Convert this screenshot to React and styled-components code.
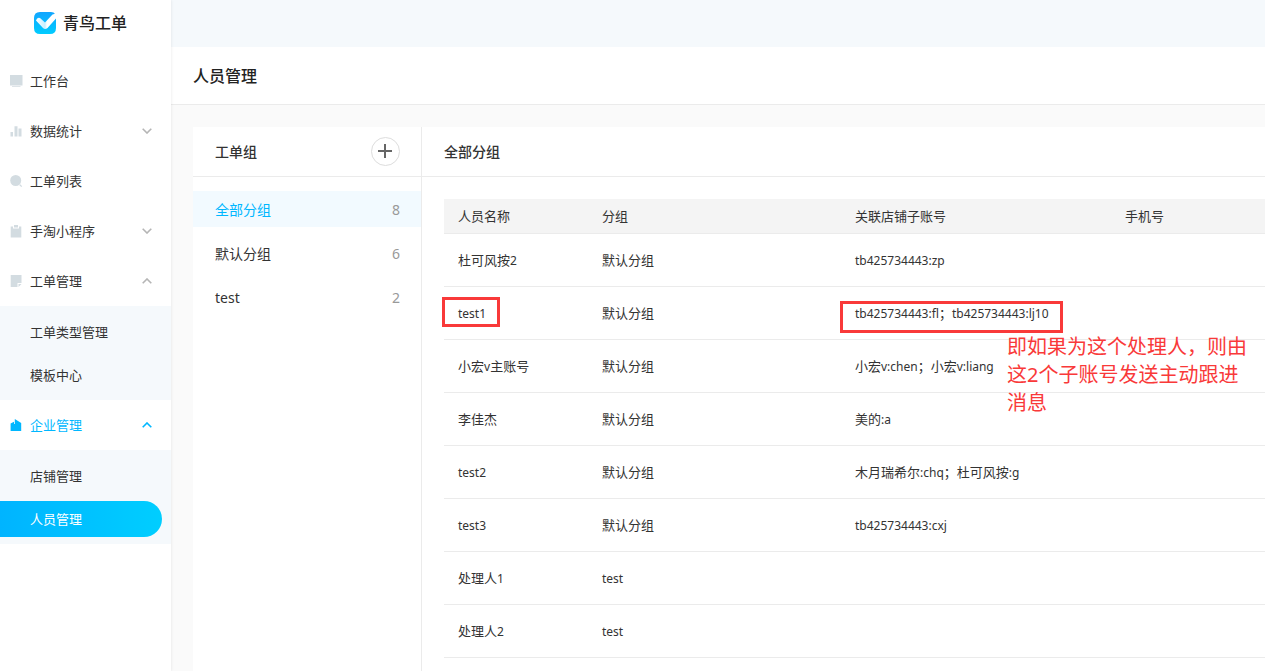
import React, { useState } from "react";
import styled, { createGlobalStyle, css } from "styled-components";

const menus = [
  { key: "desk", label: "工作台" },
  { key: "stats", label: "数据统计", children: [] },
  { key: "list", label: "工单列表" },
  { key: "mini", label: "手淘小程序", children: [] },
  { key: "order", label: "工单管理", open: true, children: ["工单类型管理", "模板中心"] },
  { key: "company", label: "企业管理", open: true, active: true, children: ["店铺管理", "人员管理"] },
];

const groups = [
  { name: "全部分组", count: 8 },
  { name: "默认分组", count: 6 },
  { name: "test", count: 2 },
];

const members = [
  { name: "杜可风按2", group: "默认分组", account: "tb425734443:zp" },
  { name: "test1", group: "默认分组", account: "tb425734443:fl；tb425734443:lj10", marked: true },
  { name: "小宏v主账号", group: "默认分组", account: "小宏v:chen；小宏v:liang" },
  { name: "李佳杰", group: "默认分组", account: "美的:a" },
  { name: "test2", group: "默认分组", account: "木月瑞希尔:chq；杜可风按:g" },
  { name: "test3", group: "默认分组", account: "tb425734443:cxj" },
  { name: "处理人1", group: "test", account: "" },
  { name: "处理人2", group: "test", account: "" },
];

function MenuIcon({ name }) {
  return (
    <Icon viewBox="0 0 12 12" aria-hidden="true">
      {name === "desk" && <path d="M0 0h12.500v10.500H0zM2 11.200h8.500v.8H2z" />}
      {name === "stats" && (
        <path d="M.5 7H3v4.500H.5zM4.500 1.200h3v10.300h-3zM8.500 3.500h3v8h-3z" />
      )}
      {name === "list" && (
        <>
          <circle cx="5.7" cy="5.5" r="5.5" />
          <path d="M9.300 10.300l1-1 1.900 1.900-.9.8z" />
        </>
      )}
      {name === "mini" && (
        <path d="M.7 1.500H3V3.600h6V1.500h2.300V12.500H.7zM4 0h4v2.600H4z" />
      )}
      {name === "order" && <path d="M.7 0h10.800v8H7.500v4H.7zM8.500 9h3l-3 3z" />}
      {name === "company" && (
        <path d="M.6 4.500L4 2.800V5h.8V0l6.400 4v8H.6z" />
      )}
    </Icon>
  );
}

function Chevron({ up }) {
  return (
    <Arrow viewBox="0 0 10 6" aria-hidden="true">
      <path d={up ? "M.7 5.300L5 1l4.300 4.300" : "M.7.7L5 5 9.300.7"} />
    </Arrow>
  );
}

// Latin runs are set one size down so they sit evenly next to the Chinese
function Mixed({ text }) {
  return text
    .split(/([\x20-\x7e]+)/)
    .filter(Boolean)
    .map((part, i) =>
      /^[\x20-\x7e]/.test(part) ? <Latin key={i}>{part}</Latin> : part
    );
}

export default function App() {
  const [currentGroup, setCurrentGroup] = useState(0);
  const [currentPage, setCurrentPage] = useState("人员管理");

  return (
    <>
      <GlobalStyle />
      <Layout>
        <Sidebar>
          <Brand>
            <Logo viewBox="0 0 22 22" aria-hidden="true">
              <defs>
                <linearGradient id="logoBg" x1="0" y1="0" x2="0" y2="1">
                  <stop offset="0" stopColor="#12a5ff" />
                  <stop offset="1" stopColor="#00ccff" />
                </linearGradient>
                <linearGradient id="logoTick" x1="0" y1="0" x2="1" y2="0">
                  <stop offset="0" stopColor="#fff" />
                  <stop offset="0.450" stopColor="#c8efff" />
                  <stop offset="0.550" stopColor="#fff" />
                </linearGradient>
              </defs>
              <path
                fill="url(#logoBg)"
                d="M6 0h11q3 0 4 2l1 4v10q0 6-6 6H6q-6 0-6-6V6q0-6 6-6z"
              />
              <path
                fill="url(#logoTick)"
                d="M2 8.500q1-3.500 4-2.500l5 4.500L18.500 2.500 22 1.500v5L13.500 16q-2.500 2-4.500 0z"
              />
            </Logo>
            青鸟工单
          </Brand>
          <nav>
            {menus.map((menu) => (
              <React.Fragment key={menu.key}>
                <MenuButton type="button" $active={menu.active}>
                  <MenuIcon name={menu.key} />
                  <span>{menu.label}</span>
                  {menu.children && <Chevron up={menu.open} />}
                </MenuButton>
                {menu.open && (
                  <SubMenu>
                    {menu.children.map((page) => (
                      <SubLink
                        key={page}
                        href="#"
                        $active={page === currentPage}
                        onClick={() => setCurrentPage(page)}
                      >
                        {page}
                      </SubLink>
                    ))}
                  </SubMenu>
                )}
              </React.Fragment>
            ))}
          </nav>
        </Sidebar>

        <Main>
          <TopBar />
          <PageHeader>
            <h1>人员管理</h1>
          </PageHeader>
          <Content>
            <GroupPanel>
              <PanelHeader>
                <h2>工单组</h2>
                <AddButton type="button" aria-label="新增">
                  <svg viewBox="0 0 15 15" aria-hidden="true">
                    <path d="M7 0v14M0 7h14" />
                  </svg>
                </AddButton>
              </PanelHeader>
              <GroupList>
                {groups.map((group, index) => (
                  <GroupButton
                    key={group.name}
                    type="button"
                    $active={index === currentGroup}
                    onClick={() => setCurrentGroup(index)}
                  >
                    <span>{group.name}</span>
                    <Count>{group.count}</Count>
                  </GroupButton>
                ))}
              </GroupList>
            </GroupPanel>

            <MemberPanel>
              <PanelHeader>
                <h2>全部分组</h2>
              </PanelHeader>
              <TableWrap>
                <Table>
                  <colgroup>
                    <Col $width={144} />
                    <Col $width={253} />
                    <Col $width={270} />
                    <col />
                  </colgroup>
                  <thead>
                    <tr>
                      <th scope="col">人员名称</th>
                      <th scope="col">分组</th>
                      <th scope="col">关联店铺子账号</th>
                      <th scope="col">手机号</th>
                    </tr>
                  </thead>
                  <tbody>
                    {members.map((member) => (
                      <tr key={member.name}>
                        <td>
                          <Mixed text={member.name} />
                          {member.marked && <NameMark />}
                        </td>
                        <td>
                          <Mixed text={member.group} />
                        </td>
                        <td>
                          <Mixed text={member.account} />
                          {member.marked && (
                            <>
                              <AccountMark />
                              <Note>即如果为这个处理人，则由这2个子账号发送主动跟进消息</Note>
                            </>
                          )}
                        </td>
                        <td></td>
                      </tr>
                    ))}
                  </tbody>
                </Table>
              </TableWrap>
            </MemberPanel>
          </Content>
        </Main>
      </Layout>
    </>
  );
}

const GlobalStyle = createGlobalStyle`
  * {
    box-sizing: border-box;
  }
  body {
    margin: 0;
    color: #333;
    background: #fafafa;
    font-family: "Noto Sans", "Noto Sans CJK SC", sans-serif;
    font-size: 13px;
    line-height: 20px;
  }
  button {
    padding: 0;
    border: 0;
    background: none;
    color: inherit;
    font: inherit;
    text-align: left;
    cursor: pointer;
  }
  h1, h2 {
    margin: 0;
    font-weight: 500;
  }
`;

const Layout = styled.div`
  display: flex;
  min-height: 100vh;
`;

const Sidebar = styled.aside`
  flex: 0 0 171px;
  position: relative;
  background: #fff;
  box-shadow: 0 0 3px rgba(0, 0, 0, 0.1);
`;

const Brand = styled.div`
  display: flex;
  align-items: center;
  gap: 7px;
  height: 45px;
  margin-bottom: 11px;
  padding-left: 34px;
  color: #222;
  font-size: 16px;
  font-weight: 500;
`;

const Logo = styled.svg`
  width: 22px;
  height: 22px;
`;

const Icon = styled.svg`
  flex: none;
  width: 12px;
  height: 12px;
  overflow: visible;
  fill: #d3dce1;
`;

const Arrow = styled.svg`
  width: 10px;
  height: 6px;
  margin-left: auto;
  fill: none;
  stroke: #b5b5b5;
  stroke-width: 1.6;
`;

const MenuButton = styled.button`
  display: flex;
  align-items: center;
  gap: 8px;
  width: 100%;
  height: 50px;
  padding: 0 19px 0 10px;
  ${(props) =>
    props.$active &&
    css`
      color: #00b7ff;
      ${Icon} {
        fill: #00b7ff;
      }
      ${Arrow} {
        stroke: #00b7ff;
      }
    `}
`;

const SubMenu = styled.div`
  display: flex;
  flex-direction: column;
  gap: 7px;
  padding: 8px 9px 7px 0;
  background: #f5f9fc;
`;

const SubLink = styled.a`
  height: 36px;
  padding-left: 30px;
  border-radius: 0 18px 18px 0;
  color: ${(props) => (props.$active ? "#fff" : "#333")};
  background: ${(props) =>
    props.$active ? "linear-gradient(90deg, #00b4ff, #00ceff)" : "none"};
  line-height: 36px;
  text-decoration: none;
`;

const Main = styled.main`
  display: flex;
  flex: 1;
  flex-direction: column;
  min-width: 0;
`;

const TopBar = styled.div`
  height: 47px;
  background: #f5f9fc;
`;

const PageHeader = styled.header`
  display: flex;
  align-items: center;
  height: 58px;
  padding-left: 22px;
  border-bottom: 1px solid #ebebeb;
  background: #fff;
  h1 {
    color: #222;
    font-size: 16px;
  }
`;

const Content = styled.div`
  display: flex;
  flex: 1;
  padding: 22px 0 0 22px;
`;

const GroupPanel = styled.section`
  flex: 0 0 229px;
  border-right: 1px solid #ebebeb;
  background: #fff;
`;

const MemberPanel = styled.section`
  flex: 1;
  min-width: 0;
  background: #fff;
`;

const PanelHeader = styled.div`
  display: flex;
  align-items: center;
  justify-content: space-between;
  height: 50px;
  padding: 0 21px 0 22px;
  border-bottom: 1px solid #ebebeb;
  h2 {
    font-size: 14px;
  }
`;

const AddButton = styled.button`
  display: flex;
  align-items: center;
  justify-content: center;
  width: 29px;
  height: 29px;
  border: 1px solid #ddd;
  border-radius: 50%;
  svg {
    width: 15px;
    height: 15px;
    stroke: #666;
    stroke-width: 2;
  }
`;

const GroupList = styled.div`
  display: flex;
  flex-direction: column;
  gap: 8px;
  padding-top: 14px;
`;

const GroupButton = styled.button`
  display: flex;
  align-items: center;
  justify-content: space-between;
  height: 36px;
  padding: 2px 21px 0 22px;
  color: ${(props) => (props.$active ? "#00b7ff" : "#333")};
  background: ${(props) => (props.$active ? "#f2faff" : "none")};
  font-size: 14px;
`;

const Count = styled.span`
  color: #999;
`;

const TableWrap = styled.div`
  padding: 22px 0 0 22px;
`;

const Table = styled.table`
  width: 100%;
  border-collapse: separate;
  border-spacing: 0;
  table-layout: fixed;
  th,
  td {
    position: relative;
    height: 53px;
    padding: 0 0 0 14px;
    border-bottom: 1px solid #ebebeb;
    text-align: left;
    white-space: nowrap;
  }
  th {
    height: 35px;
    background: #f4f4f4;
    font-weight: 400;
  }
`;

const Col = styled.col`
  width: ${(props) => props.$width}px;
`;

const Latin = styled.span`
  font-size: 12px;
`;

const Mark = styled.span`
  position: absolute;
  border: 3px solid #f93939;
  pointer-events: none;
`;

const NameMark = styled(Mark)`
  top: 10px;
  left: -2px;
  width: 58px;
  height: 30px;
`;

const AccountMark = styled(Mark)`
  top: 14px;
  left: -1px;
  width: 223px;
  height: 32px;
`;

const Note = styled.p`
  position: absolute;
  z-index: 1;
  top: 46px;
  left: 166px;
  width: 244px;
  margin: 0;
  color: #f93939;
  font-size: 20px;
  line-height: 28px;
  white-space: normal;
`;
